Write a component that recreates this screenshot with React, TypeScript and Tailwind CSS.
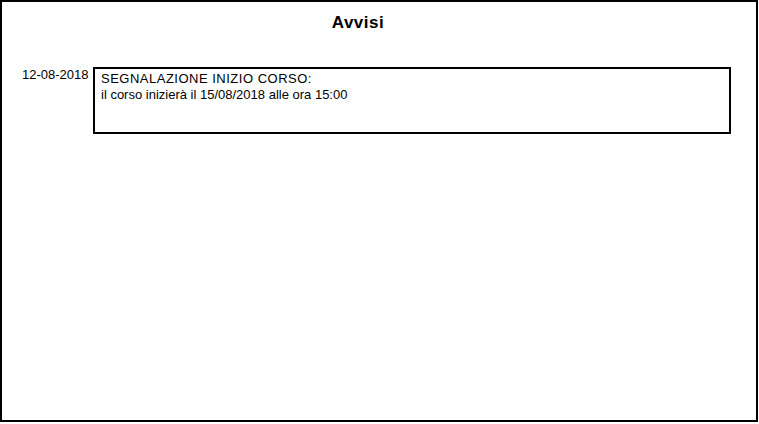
export default function App() {
  return (
    <div className="w-[759px] h-[424px] bg-white" style={{ fontFamily: '"Liberation Sans", Arial, sans-serif' }}>
      <div className="w-[758px] h-[422px] border-2 border-black text-black">
        <div className="flex justify-center pt-[11px] pr-[42px]">
          <h1 className="text-[17px] leading-[20px] font-bold tracking-[0.5px]">Avvisi</h1>
        </div>
        <div className="flex items-start mt-[34px] pl-[20px]">
          <div className="w-[71px] text-[13px] leading-[16px]">12-08-2018</div>
          <div className="w-[638px] h-[67px] border-2 border-black pl-[6px] pt-[2px] text-[13px] leading-[16px]">
            <p className="tracking-[0.5px]">SEGNALAZIONE INIZIO CORSO:</p>
            <p>il corso inizierà il 15/08/2018 alle ora 15:00</p>
          </div>
        </div>
      </div>
    </div>
  );
}
